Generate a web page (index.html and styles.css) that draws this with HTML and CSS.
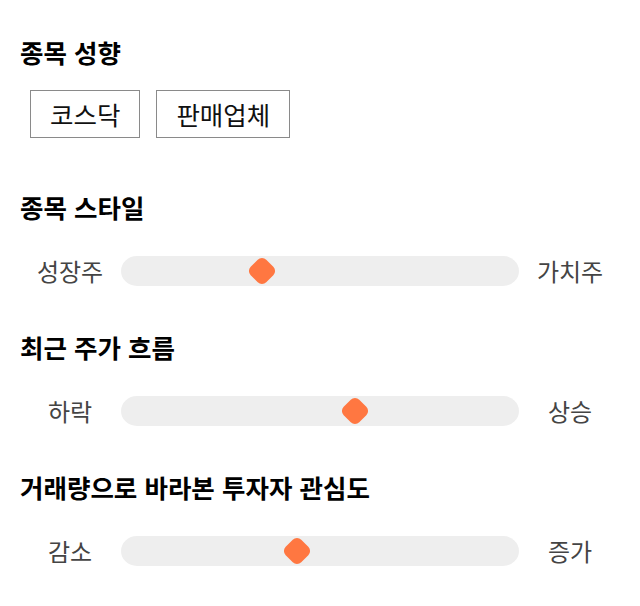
FILE: index.html
```html
<!DOCTYPE html>
<html lang="ko">
<head>
<meta charset="utf-8">
<title>종목 성향</title>
<link rel="stylesheet" href="styles.css">
</head>
<body>
<div class="page">
  <section class="section">
    <h2 class="title">종목 성향</h2>
    <div class="tags">
      <span class="tag">코스닥</span>
      <span class="tag">판매업체</span>
    </div>
  </section>

  <section class="section">
    <h2 class="title">종목 스타일</h2>
    <div class="slider-row">
      <span class="label">성장주</span>
      <div class="track"><span class="thumb" style="left: 35.4%"></span></div>
      <span class="label">가치주</span>
    </div>
  </section>

  <section class="section">
    <h2 class="title">최근 주가 흐름</h2>
    <div class="slider-row">
      <span class="label">하락</span>
      <div class="track"><span class="thumb" style="left: 58.8%"></span></div>
      <span class="label">상승</span>
    </div>
  </section>

  <section class="section">
    <h2 class="title">거래량으로 바라본 투자자 관심도</h2>
    <div class="slider-row">
      <span class="label">감소</span>
      <div class="track"><span class="thumb" style="left: 44.2%"></span></div>
      <span class="label">증가</span>
    </div>
  </section>
</div>
</body>
</html>
```

FILE: styles.css
```css
* { box-sizing: border-box; }

html, body {
  margin: 0;
  padding: 0;
  background: #ffffff;
}

body {
  font-family: "Noto Sans CJK KR", "Noto Sans", sans-serif;
  color: #000;
}

.page {
  padding: 36px 20px 0 20px;
  width: 640px;
}

.section + .section {
  margin-top: 40px;
}

.section:first-child + .section {
  margin-top: 53px;
}

.title {
  margin: 0;
  font-size: 25.5px;
  line-height: 32px;
  font-weight: 700;
  color: #000;
}

.tags {
  display: flex;
  gap: 16px;
  margin-top: 22px;
  padding-left: 10px;
}

.tag {
  display: block;
  height: 48px;
  line-height: 46px;
  padding: 0 19px;
  border: 1px solid #8a8a8a;
  font-size: 25.5px;
  color: #111;
}

.slider-row {
  display: flex;
  align-items: center;
  height: 40px;
  margin-top: 28px;
}

.label {
  width: 100px;
  flex: none;
  text-align: center;
  font-size: 24px;
  line-height: 40px;
  color: #444;
}

.track {
  position: relative;
  flex: 1;
  height: 30px;
  margin: 0 1px;
  background: #eeeeee;
  border-radius: 16px / 15px;
}

.thumb {
  position: absolute;
  top: 50%;
  width: 22px;
  height: 22px;
  margin-left: -11px;
  margin-top: -11px;
  background: #ff7741;
  border-radius: 6px;
  transform: rotate(45deg);
}
```
